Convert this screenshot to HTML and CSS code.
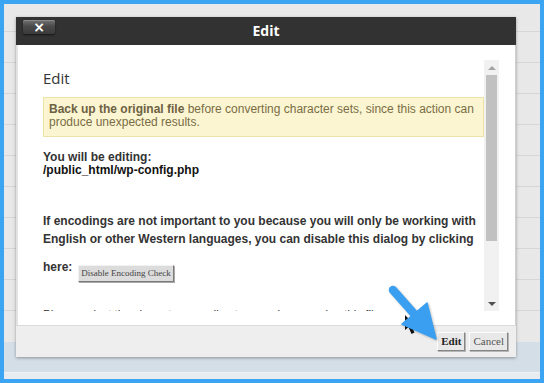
FILE: index.html
```html
<!DOCTYPE html>
<html>
<head>
<meta charset="utf-8">
<link rel="stylesheet" href="styles.css">
</head>
<body>
<div class="frame">
  <div class="page">
    <div class="row"></div><div class="row"></div><div class="row"></div><div class="row"></div><div class="row"></div>
    <div class="row"></div><div class="row"></div><div class="row"></div><div class="row"></div><div class="row"></div>
    <div class="row row-plain"></div>
    <div class="band"></div>
    <div class="band-bottom"></div>
  </div>

  <div class="dialog">
    <div class="titlebar">
      <button class="close">×</button>
      <span class="title">Edit</span>
    </div>
    <div class="dbody">
      <div class="scrollwrap">
        <div class="scroll-content">
          <h2 class="heading">Edit</h2>
          <div class="alert"><strong>Back up the original file</strong> before converting character sets, since this action can<br>produce unexpected results.</div>
          <p class="editing">You will be editing:<br><span class="path">/public_html/wp-config.php</span></p>
          <p class="info">If encodings are not important to you because you will only be working with<br>English or other Western languages, you can disable this dialog by clicking</p>
          <div class="here-row"><span class="here">here:</span><button class="small-btn">Disable Encoding Check</button></div>
          <p class="select">Please select the character encoding to use when opening this file:</p>
        </div>
        <div class="scrollbar">
          <div class="sb-btn"><span class="tri-up"></span></div>
          <div class="sb-track"><div class="sb-thumb"></div></div>
          <div class="sb-btn"><span class="tri-down"></span></div>
        </div>
      </div>
    </div>
    <div class="dfooter">
      <button class="btn btn-edit">Edit</button>
      <button class="btn">Cancel</button>
    </div>
  </div>

  <svg class="annot" width="544" height="383" viewBox="0 0 544 383">
    <polygon points="405,315 405,330 408.5,327 411.5,334 414.5,332.5 411.5,326 416,326" fill="#111"/>
    <g class="arrow">
      <line x1="393" y1="290" x2="416" y2="316" stroke="#3a9ff0" stroke-width="8.5" stroke-linecap="round"/>
      <polygon points="402,324 427,303 436,339" fill="#3a9ff0" stroke="#3a9ff0" stroke-width="1.5" stroke-linejoin="round"/>
    </g>
  </svg>
</div>
</body>
</html>
```

FILE: styles.css
```css
body {
  margin: 0;
}

.frame {
  position: relative;
  width: 544px;
  height: 383px;
  box-sizing: border-box;
  border: 4px solid #3ba4f3;
  background: #e8e8e8;
  overflow: hidden;
  font-family: "Liberation Sans", Arial, sans-serif;
}

.page {
  display: flex;
  flex-direction: column;
  margin-top: -3px;
}

.row {
  flex: none;
  height: 30px;
  border-bottom: 1px solid #d6d6d6;
}

.row-plain {
  height: 31px;
  border-bottom: 0;
}

.band {
  flex: none;
  height: 30px;
  background: #d4dee6;
  border-bottom: 1px solid #f1f4f6;
}

.band-bottom {
  flex: none;
  height: 20px;
  background: #e6ecf0;
}

.dialog {
  position: absolute;
  left: 12px;
  top: 13px;
  width: 500px;
  box-shadow: 0 1px 3px rgba(0, 0, 0, 0.35);
}

.titlebar {
  position: relative;
  height: 28px;
  background: #323232;
  text-align: center;
}

.title {
  font-family: "Open Sans", sans-serif;
  font-weight: 700;
  font-size: 14px;
  line-height: 28px;
  color: #fff;
}

.close {
  position: absolute;
  left: 7px;
  top: 3px;
  width: 32px;
  height: 14px;
  padding: 0;
  border: 0;
  border-radius: 2px;
  background: linear-gradient(#727272, #4a4a4a 45%, #3a3a3a);
  box-shadow: 0 1px 2px rgba(0, 0, 0, 0.6), inset 0 1px 0 #8a8a8a;
  color: #fff;
  font-family: "DejaVu Sans", sans-serif;
  font-weight: 700;
  font-size: 14px;
  line-height: 14px;
}

.dbody {
  height: 265px;
  padding: 15px 16px 0 10px;
  background: #fff;
  border-left: 2px solid #e2e2e2;
  border-right: 1px solid #d0d0d0;
}

.scrollwrap {
  display: flex;
  height: 251px;
}

.scroll-content {
  flex: 1;
  overflow: hidden;
  padding-left: 15px;
  color: #333;
  font-size: 12px;
}

.heading {
  margin: 0;
  padding-top: 8px;
  font-family: "Open Sans", sans-serif;
  font-weight: 400;
  font-size: 15px;
  line-height: 21px;
  color: #333;
}

.alert {
  margin-top: 8px;
  padding: 5px 5px 7px;
  border: 1px solid #ede2a8;
  background: #fbf5d2;
  color: #7a6d45;
  font-size: 12px;
  line-height: 13px;
}

.alert strong {
  color: #6d6142;
}

.editing {
  margin: 14px 0 0;
  font-weight: 700;
  line-height: 13px;
  color: #333;
}

.path {
  color: #111;
}

.info {
  margin: 35px 0 0;
  font-weight: 700;
  line-height: 18px;
  color: #333;
}

.here-row {
  display: flex;
  align-items: flex-start;
  gap: 6px;
  margin-top: 10px;
}

.here {
  font-weight: 700;
  line-height: 18px;
}

.small-btn {
  margin-top: 7px;
  height: 17px;
  padding: 0 2px;
  border: 1px solid;
  border-color: #f2f2f2 #7a7a7a #7a7a7a #f2f2f2;
  box-shadow: 1px 1px 0 #aaa;
  background: #dcdcdc;
  color: #444;
  font-family: "Liberation Serif", serif;
  font-size: 9px;
  line-height: 15px;
}

.select {
  margin: 23px 0 0;
  font-size: 11.5px;
  line-height: 18px;
  color: #333;
}

.scrollbar {
  flex: none;
  width: 15px;
  display: flex;
  flex-direction: column;
  background: #f1f1f1;
}

.sb-btn {
  flex: none;
  height: 15px;
  display: flex;
  align-items: center;
  justify-content: center;
}

.tri-up {
  width: 0;
  height: 0;
  border-left: 4px solid transparent;
  border-right: 4px solid transparent;
  border-bottom: 4px solid #a3a3a3;
}

.tri-down {
  width: 0;
  height: 0;
  border-left: 4px solid transparent;
  border-right: 4px solid transparent;
  border-top: 4px solid #505050;
}

.sb-track {
  flex: 1;
  padding: 0 2px;
}

.sb-thumb {
  height: 166px;
  background: #c1c1c1;
}

.dfooter {
  height: 31px;
  display: flex;
  align-items: center;
  justify-content: flex-end;
  gap: 4px;
  padding-right: 8px;
  background: #eeeeee;
  border-top: 1px solid #dadada;
}

.btn {
  height: 19px;
  padding: 0 3px;
  border: 1px solid;
  border-color: #fdfdfd #858585 #858585 #fdfdfd;
  box-shadow: 1px 1px 0 #b5b5b5;
  background: #e8e8e8;
  color: #555;
  font-family: "Liberation Serif", serif;
  font-size: 11px;
  line-height: 17px;
}

.btn-edit {
  font-weight: 700;
  color: #222;
}

.annot {
  position: absolute;
  left: -4px;
  top: -4px;
  pointer-events: none;
}

.arrow {
  filter: drop-shadow(1px 1px 1px rgba(0, 0, 0, 0.25));
}
```
